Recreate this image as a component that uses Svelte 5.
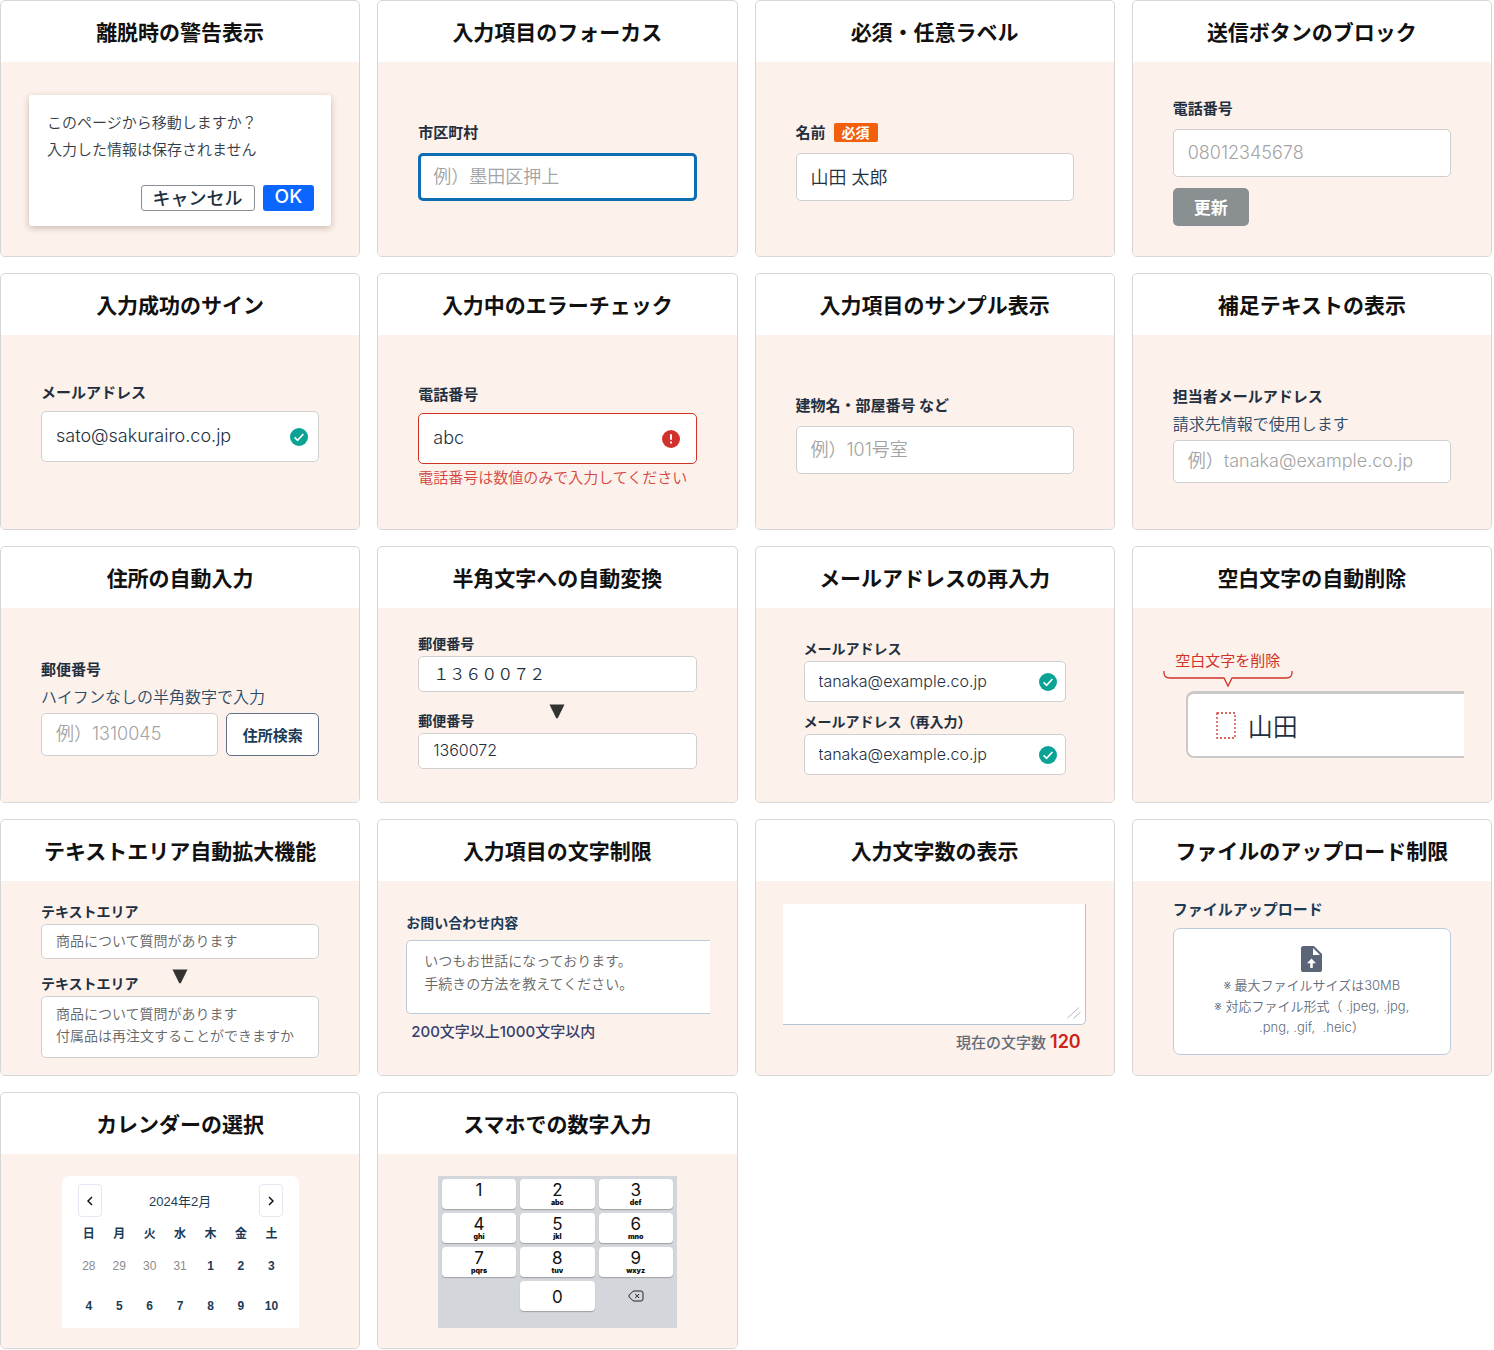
<script lang="ts">
  import type { Snippet } from "svelte";

  const weekdays = ["日", "月", "火", "水", "木", "金", "土"];

  const weeks = [
    [28, 29, 30, 31, 1, 2, 3],
    [4, 5, 6, 7, 8, 9, 10],
  ];

  const keys = [
    { digit: "1", letters: "" },
    { digit: "2", letters: "abc" },
    { digit: "3", letters: "def" },
    { digit: "4", letters: "ghi" },
    { digit: "5", letters: "jkl" },
    { digit: "6", letters: "mno" },
    { digit: "7", letters: "pqrs" },
    { digit: "8", letters: "tuv" },
    { digit: "9", letters: "wxyz" },
  ];

  const question = "商品について質問があります";
  const longQuestion = question + "\n付属品は再注文することができますか";
  const inquiry = "いつもお世話になっております。\n手続きの方法を教えてください。";
</script>

{#snippet card(title: string, kind: string, body: Snippet)}
  <article class="card">
    <h2>{title}</h2>
    <div class="body {kind}">{@render body()}</div>
  </article>
{/snippet}

{#snippet okIcon()}
  <svg class="state" viewBox="0 0 18 18" aria-hidden="true">
    <circle cx="9" cy="9" r="9" fill="#0aa396" />
    <path d="M4.6 9.4 7.6 12.3 13.4 6" fill="none" stroke="#fff" stroke-width="1.7" />
  </svg>
{/snippet}

{#snippet arrow()}
  <svg class="arrow" viewBox="0 0 16 15" aria-hidden="true">
    <path d="M0.5 0.5h15L9 13.8q-1 1.6-2 0z" fill="#333" />
  </svg>
{/snippet}

{#snippet leave()}
  <div class="dialog" role="dialog" aria-label="移動の確認">
    <p>このページから移動しますか？</p>
    <p>入力した情報は保存されません</p>
    <div class="actions">
      <button class="cancel" type="button">キャンセル</button>
      <button class="ok" type="button">OK</button>
    </div>
  </div>
{/snippet}

{#snippet focus()}
  <label for="city">市区町村</label>
  <input id="city" class="focused" type="text" placeholder="例）墨田区押上" />
{/snippet}

{#snippet required()}
  <div class="label-row">
    <label for="name">名前</label>
    <span class="badge">必須</span>
  </div>
  <input id="name" type="text" value="山田 太郎" />
{/snippet}

{#snippet block()}
  <label for="tel">電話番号</label>
  <input id="tel" type="tel" placeholder="08012345678" />
  <button class="update" type="button" disabled>更新</button>
{/snippet}

{#snippet success()}
  <label for="mail">メールアドレス</label>
  <div class="with-state">
    <input id="mail" type="text" value="sato@sakurairo.co.jp" />
    {@render okIcon()}
  </div>
{/snippet}

{#snippet error()}
  <label for="tel-error">電話番号</label>
  <div class="with-state">
    <input id="tel-error" class="invalid" type="text" value="abc" aria-describedby="tel-message" />
    <svg class="state" viewBox="0 0 18 18" aria-hidden="true">
      <circle cx="9" cy="9" r="9" fill="#d2322d" />
      <path d="M9 4.3v5.4M9 11.6v1.9" stroke="#fff" stroke-width="1.9" />
    </svg>
  </div>
  <p id="tel-message" class="message">電話番号は数値のみで入力してください</p>
{/snippet}

{#snippet sample()}
  <label for="building">建物名・部屋番号 など</label>
  <input id="building" type="text" placeholder="例）101号室" />
{/snippet}

{#snippet note()}
  <label for="staff">担当者メールアドレス</label>
  <p class="hint">請求先情報で使用します</p>
  <input id="staff" type="text" placeholder="例）tanaka@example.co.jp" />
{/snippet}

{#snippet address()}
  <label for="zip">郵便番号</label>
  <p class="hint">ハイフンなしの半角数字で入力</p>
  <div class="search">
    <input id="zip" type="text" placeholder="例）1310045" />
    <button type="button">住所検索</button>
  </div>
{/snippet}

{#snippet halfwidth()}
  <label for="zip-full">郵便番号</label>
  <input id="zip-full" type="text" value="１３６００７２" />
  <div class="arrow-row">
    <label for="zip-half">郵便番号</label>
    {@render arrow()}
  </div>
  <input id="zip-half" type="text" value="1360072" />
{/snippet}

{#snippet retype()}
  <label for="mail-first">メールアドレス</label>
  <div class="with-state">
    <input id="mail-first" type="text" value="tanaka@example.co.jp" />
    {@render okIcon()}
  </div>
  <label class="second" for="mail-second">メールアドレス（再入力）</label>
  <div class="with-state">
    <input id="mail-second" type="text" value="tanaka@example.co.jp" />
    {@render okIcon()}
  </div>
{/snippet}

{#snippet trim()}
  <div class="callout">
    <span>空白文字を削除</span>
    <svg viewBox="0 0 130 18" aria-hidden="true">
      <path
        d="M1 1v2q0 5 6 5h54l4 8 4-8h54q6 0 6-5V1"
        fill="none"
        stroke="#cf3327"
        stroke-width="1.3"
      />
    </svg>
  </div>
  <div class="trimmed">
    <svg viewBox="0 0 20 27" aria-hidden="true">
      <rect x="1" y="1" width="18" height="25" fill="none" stroke="#cf3327" stroke-dasharray="2 2" stroke-width="1.3" />
    </svg>
    <span>山田</span>
  </div>
{/snippet}

{#snippet autosize()}
  <label for="area-short">テキストエリア</label>
  <textarea id="area-short" rows="1" value={question}></textarea>
  <div class="arrow-row">
    <label for="area-long">テキストエリア</label>
    {@render arrow()}
  </div>
  <textarea id="area-long" class="grown" rows="2" value={longQuestion}></textarea>
{/snippet}

{#snippet limit()}
  <label for="inquiry">お問い合わせ内容</label>
  <textarea id="inquiry" rows="2" value={inquiry}></textarea>
  <p class="range">200文字以上1000文字以内</p>
{/snippet}

{#snippet counter()}
  <div class="resizable">
    <textarea aria-label="本文"></textarea>
    <svg class="grip" viewBox="0 0 14 12" aria-hidden="true">
      <path d="M0.5 11 12 0.5M6.5 11.5 13.5 5" stroke="#b5b5b5" fill="none" />
    </svg>
  </div>
  <p class="count">現在の文字数 <b>120</b></p>
{/snippet}

{#snippet upload()}
  <label for="file">ファイルアップロード</label>
  <button id="file" class="drop" type="button">
    <svg viewBox="0 0 21 26" aria-hidden="true">
      <path
        d="M2.6 0H13l8 8v15.4a2.6 2.6 0 0 1-2.6 2.6H2.6A2.6 2.6 0 0 1 0 23.4V2.6A2.6 2.6 0 0 1 2.6 0z"
        fill="#5a6577"
      />
      <path d="M12 2v7h7z" fill="#fff" />
      <path d="M10.5 12.5 6 17.2h3.200V22h2.600v-4.800H15z" fill="#fff" />
    </svg>
    <span>※ 最大ファイルサイズは30MB</span>
    <span>※ 対応ファイル形式（ .jpeg, .jpg,</span>
    <span>.png, .gif,&nbsp; .heic）</span>
  </button>
{/snippet}

{#snippet calendar()}
  <div class="calendar">
    <div class="month">
      <button type="button" aria-label="前の月">
        <svg viewBox="0 0 6 10" aria-hidden="true"><path d="M5 1 1 5l4 4" /></svg>
      </button>
      <span>2024年2月</span>
      <button type="button" aria-label="次の月">
        <svg viewBox="0 0 6 10" aria-hidden="true"><path d="m1 1 4 4-4 4" /></svg>
      </button>
    </div>
    <table>
      <thead>
        <tr>
          {#each weekdays as day}<th>{day}</th>{/each}
        </tr>
      </thead>
      <tbody>
        {#each weeks as week}
          <tr>
            {#each week as date}<td class:outside={date > 20}>{date}</td>{/each}
          </tr>
        {/each}
      </tbody>
    </table>
  </div>
{/snippet}

{#snippet keypad()}
  <div class="keypad">
    {#each keys as key}
      <button type="button">
        {key.digit}
        <small>{key.letters}</small>
      </button>
    {/each}
    <span></span>
    <button class="zero" type="button">0</button>
    <button class="delete" type="button" aria-label="削除">
      <svg viewBox="0 0 16 12" aria-hidden="true">
        <path d="M5.3 1H13a2 2 0 0 1 2 2v6a2 2 0 0 1-2 2H5.3L1.3 7q-.9-1 0-2z" />
        <path d="m7.2 4 4 4m0-4-4 4" />
      </svg>
    </button>
  </div>
{/snippet}

<main>
  {@render card("離脱時の警告表示", "leave", leave)}
  {@render card("入力項目のフォーカス", "focus", focus)}
  {@render card("必須・任意ラベル", "required", required)}
  {@render card("送信ボタンのブロック", "block", block)}
  {@render card("入力成功のサイン", "success", success)}
  {@render card("入力中のエラーチェック", "error", error)}
  {@render card("入力項目のサンプル表示", "sample", sample)}
  {@render card("補足テキストの表示", "note", note)}
  {@render card("住所の自動入力", "address", address)}
  {@render card("半角文字への自動変換", "halfwidth", halfwidth)}
  {@render card("メールアドレスの再入力", "retype", retype)}
  {@render card("空白文字の自動削除", "trim", trim)}
  {@render card("テキストエリア自動拡大機能", "autosize", autosize)}
  {@render card("入力項目の文字制限", "limit", limit)}
  {@render card("入力文字数の表示", "counter", counter)}
  {@render card("ファイルのアップロード制限", "upload", upload)}
  {@render card("カレンダーの選択", "calendar-body", calendar)}
  {@render card("スマホでの数字入力", "keypad-body", keypad)}
</main>

<style>
:global(body) { background: #fff; }

main {
  display: grid;
  grid-template-columns: repeat(4, minmax(0, 1fr));
  grid-auto-rows: minmax(257px, auto);
  gap: 16px 17px;
  padding-right: 2px;
  color: #232f3e;
  font-family: "Noto Sans CJK JP", sans-serif;
  font-size: 15px;
}
main * { box-sizing: border-box; }

.card {
  display: flex;
  flex-direction: column;
  border: 1px solid #d6d6d6;
  border-radius: 5px;
  overflow: hidden;
}
h2 {
  margin: 0;
  padding: 15px 0 16px;
  color: #111;
  font-size: 21px;
  line-height: 30px;
  font-weight: 700;
  text-align: center;
}
.body {
  flex: 1;
  display: flex;
  flex-direction: column;
  padding: 0 40px;
  background: #fcf1eb;
}
p { margin: 0; }

label {
  font-weight: 700;
  line-height: 22px;
}
input, textarea {
  width: 100%;
  min-width: 0;
  height: 48px;
  padding: 0 14px 2px;
  border: 1px solid #cfcfcf;
  border-radius: 5px;
  background: #fff;
  color: #232f3e;
  font-family: Inter, "Noto Sans CJK JP", sans-serif;
  font-size: 18px;
  font-weight: 350;
}
input::placeholder { color: #a3a3a3; opacity: 1; }
textarea {
  display: block;
  resize: none;
  overflow: hidden;
  color: #666;
  font-size: 14px;
  line-height: 22px;
}
button {
  padding: 0;
  border: 1px solid transparent;
  border-radius: 3px;
  background: #fff;
  font-family: inherit;
}

.with-state { position: relative; display: flex; }
.state {
  position: absolute;
  top: 50%;
  right: 11px;
  width: 18px;
  height: 18px;
  margin-top: -9px;
}
.hint {
  margin: 4px 0 5px;
  color: #2c4a66;
  font-size: 16px;
  line-height: 24px;
  font-weight: 350;
}

/* confirm dialog */
.leave { padding: 33px 28px 0; }
.dialog {
  padding: 13px 17px 15px 18px;
  border-radius: 3px;
  background: #fff;
  box-shadow: 0 2px 6px rgb(90 60 40 / 30%);
  color: #333b45;
  line-height: 27px;
  font-weight: 350;
}
.actions {
  display: flex;
  justify-content: flex-end;
  gap: 8px;
  margin-top: 23px;
}
.actions button {
  height: 26px;
  padding: 0 11px 2px;
  font-size: 18px;
  line-height: 22px;
  font-weight: 500;
}
.actions .cancel { border-color: #8a8f96; color: #232f3e; }
.actions .ok {
  background: #0b66ff;
  color: #fff;
  font-family: Inter, sans-serif;
  font-size: 19px;
}

.focus, .required { padding-top: 59px; }
.focus label, .label-row, .block label, .sample label { margin-bottom: 10px; }
.focused { border: 3px solid #0f6db3; padding: 0 12px 2px; }
.label-row { display: flex; align-items: center; gap: 8px; }
.badge {
  padding: 0 8px;
  border-radius: 2px;
  background: #f2600c;
  color: #fff;
  font-size: 14px;
  line-height: 19px;
  font-weight: 700;
}

.block { padding-top: 35px; }
.update {
  align-self: flex-start;
  height: 38px;
  margin-top: 11px;
  padding: 0 20px 2px;
  border-radius: 5px;
  background: #8a8f91;
  color: #fff;
  font-size: 17px;
  font-weight: 700;
}

.success { padding-top: 46px; }
.error { padding-top: 48px; }
.success label, .error label { margin-bottom: 8px; }
.success input, .error input { height: 51px; }
.invalid { border-color: #cf3327; }
.error .state { right: 17px; }
.message {
  margin-top: 1px;
  color: #d6453d;
  line-height: 24px;
  font-weight: 350;
}

.sample { padding-top: 59px; }
.note { padding-top: 50px; }
.note input, .address input { height: 43px; }

.address { padding-top: 50px; }
.search { display: flex; gap: 8px; }
.search button {
  flex: none;
  width: 93px;
  border-color: #5f6f86;
  border-radius: 5px;
  color: #1c3b57;
  font-size: 15px;
  font-weight: 700;
}

/* before and after pairs */
.halfwidth label, .retype label, .autosize label, .limit label {
  font-size: 14px;
  line-height: 18px;
  margin-bottom: 4px;
}
.halfwidth { padding-top: 26px; }
.halfwidth input { height: 36px; font-size: 16px; }
.arrow-row {
  display: grid;
  grid-template-columns: 1fr auto 1fr;
  margin-top: 12px;
}
.arrow-row label { padding-top: 7px; }
.arrow { width: 16px; height: 15px; }

.retype { padding: 31px 48px 0; }
.retype input { height: 41px; font-size: 16px; }
.retype .state { right: 9px; }
.retype .second { margin-top: 10px; }

/* leading blank removed */
.trim { padding: 42px 27px 0 30px; }
.callout {
  align-self: flex-start;
  display: flex;
  flex-direction: column;
  align-items: center;
  color: #cf3327;
  line-height: 20px;
}
.callout svg { width: 130px; height: 18px; }
.trimmed {
  display: flex;
  align-items: center;
  gap: 12px;
  height: 67px;
  margin: 3px 0 0 23px;
  padding-left: 28px;
  border: 2px solid #c9c9c9;
  border-top-width: 3px;
  border-right: 0;
  border-radius: 8px 0 0 8px;
  background: #fff;
  font-size: 25px;
  font-weight: 350;
}
.trimmed svg { width: 20px; height: 27px; }

.autosize { padding-top: 21px; }
.autosize textarea { height: 35px; padding: 5px 14px; }
.autosize .grown { height: 62px; padding-top: 6px; }
.autosize .arrow-row { margin-top: 10px; }
.autosize .arrow-row label { padding-top: 5px; }

.limit { padding: 32px 27px 0 28px; color: #1c3b57; }
.limit label { margin-bottom: 9px; }
.limit textarea {
  height: 74px;
  padding: 8px 17px;
  border-color: #bccbdb;
  border-right: 0;
  border-radius: 5px 0 0 5px;
  line-height: 23px;
}
.range {
  margin: 6px 0 0 5px;
  color: #36406b;
  font-family: Inter, "Noto Sans CJK JP", sans-serif;
  line-height: 24px;
  font-weight: 500;
}

.counter { padding: 23px 28px 0 27px; }
.resizable { position: relative; }
.resizable textarea {
  height: 121px;
  border-width: 0 1px 1px 0;
  border-color: #b4c3d6;
  border-radius: 0 0 5px 0;
}
.grip {
  position: absolute;
  right: 5px;
  bottom: 6px;
  width: 14px;
  height: 12px;
}
.count {
  margin-top: 5px;
  padding-right: 5px;
  color: #626c7a;
  font-family: Inter, "Noto Sans CJK JP", sans-serif;
  line-height: 24px;
  font-weight: 500;
  text-align: right;
}
.count b { color: #cc2418; font-size: 18px; font-weight: 600; }

.upload { padding-top: 17px; }
.upload label { color: #1c3b57; margin-bottom: 8px; }
.drop {
  display: flex;
  flex-direction: column;
  align-items: center;
  padding: 17px 0 16px;
  border-color: #bccbdb;
  border-radius: 7px;
  color: #626c7a;
  font-family: Inter, "Noto Sans CJK JP", sans-serif;
  font-size: 13px;
  line-height: 21px;
  font-weight: 350;
}
.drop svg { width: 21px; height: 26px; margin-bottom: 3px; }

.calendar-body, .keypad-body { align-items: center; padding-top: 22px; }
.calendar {
  width: 237px;
  padding: 8px 12px 2px;
  border-radius: 7px 7px 0 0;
  background: #fff;
  color: #1c3b57;
  font-family: "Liberation Sans", "Noto Sans CJK JP", sans-serif;
}
.month {
  display: flex;
  justify-content: space-between;
  align-items: center;
  padding: 0 4px;
  font-size: 13px;
}
.month button {
  display: flex;
  align-items: center;
  justify-content: center;
  width: 24px;
  height: 33px;
  border-color: #e3e8f2;
  border-radius: 4px;
}
.month svg { width: 6px; height: 10px; fill: none; stroke: #111; stroke-width: 1.5; }
table {
  width: 100%;
  margin-top: 3px;
  border-collapse: collapse;
  table-layout: fixed;
  font-size: 12px;
  text-align: center;
}
th { height: 26px; padding: 0 0 2px; font-weight: 700; }
td { height: 40px; padding: 0; font-weight: 700; }
.outside { color: #8c8c8c; font-weight: 400; }

.keypad {
  display: grid;
  grid-template-columns: repeat(3, 1fr);
  grid-auto-rows: 30px;
  gap: 4px;
  width: 239px;
  padding: 3px 4px 17px;
  background: #d3d6db;
}
.keypad button {
  display: flex;
  flex-direction: column;
  align-items: center;
  border: 0;
  border-radius: 4px;
  box-shadow: 0 1px 1px rgb(0 0 0 / 25%);
  padding-top: 3px;
  color: #111;
  font-family: Inter, sans-serif;
  font-size: 17px;
  line-height: 17px;
}
.keypad small { font-size: 7px; line-height: 7px; font-weight: 900; }
.keypad .zero { justify-content: center; padding: 3px 0 0; }
.keypad .delete { justify-content: center; padding: 0; background: none; box-shadow: none; }
.delete svg { width: 16px; height: 12px; fill: none; stroke: #222; }
</style>
